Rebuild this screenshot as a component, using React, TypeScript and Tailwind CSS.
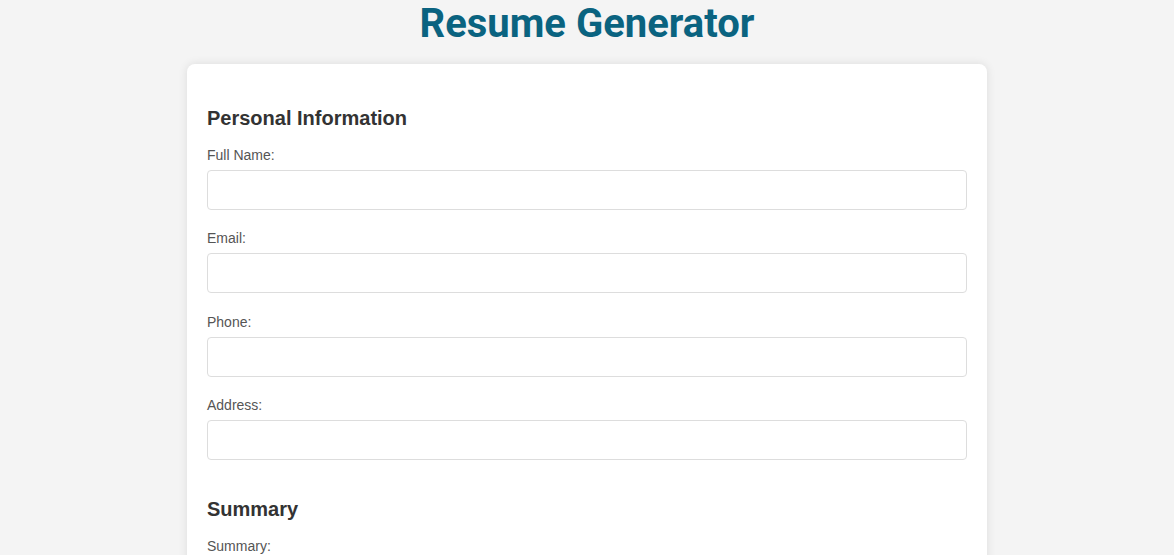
import React from "react";

const Field = ({ label }: { label: string }) => (
  <div className="mb-[20.33px]">
    <label className="block text-[14px] leading-[16px] mb-[7px] text-[#555]">
      {label}
    </label>
    <input
      type="text"
      className="block w-full h-[40px] border border-[#ddd] rounded-[4px] px-[10px] bg-white outline-none"
    />
  </div>
);

export default function App() {
  return (
    <div className="min-h-[555px] bg-[#f4f4f4] font-['Liberation_Sans',Arial,sans-serif] overflow-hidden">
      <h1 className="m-0 text-center font-['Roboto',sans-serif] font-bold text-[40px] leading-[48px] text-[#0a6380]">
        Resume Generator
      </h1>
      <div className="mx-auto mt-[16px] w-[800px] bg-white rounded-[8px] shadow-[0_0_10px_rgba(0,0,0,0.1)] px-[20px] pt-[20px] pb-[20px]">
        <h2 className="mt-[23px] mb-[17px] text-[20px] leading-[23px] font-bold text-[#333]">
          Personal Information
        </h2>
        <Field label="Full Name:" />
        <Field label="Email:" />
        <Field label="Phone:" />
        <Field label="Address:" />
        <h2 className="mt-[38px] mb-[17px] text-[20px] leading-[23px] font-bold text-[#333]">
          Summary
        </h2>
        <div>
          <label className="block text-[14px] leading-[16px] mb-[7px] text-[#555]">Summary:</label>
          <textarea className="block w-full h-[100px] border border-[#ddd] rounded-[4px] p-[10px] outline-none resize-y" />
        </div>
      </div>
    </div>
  );
}
